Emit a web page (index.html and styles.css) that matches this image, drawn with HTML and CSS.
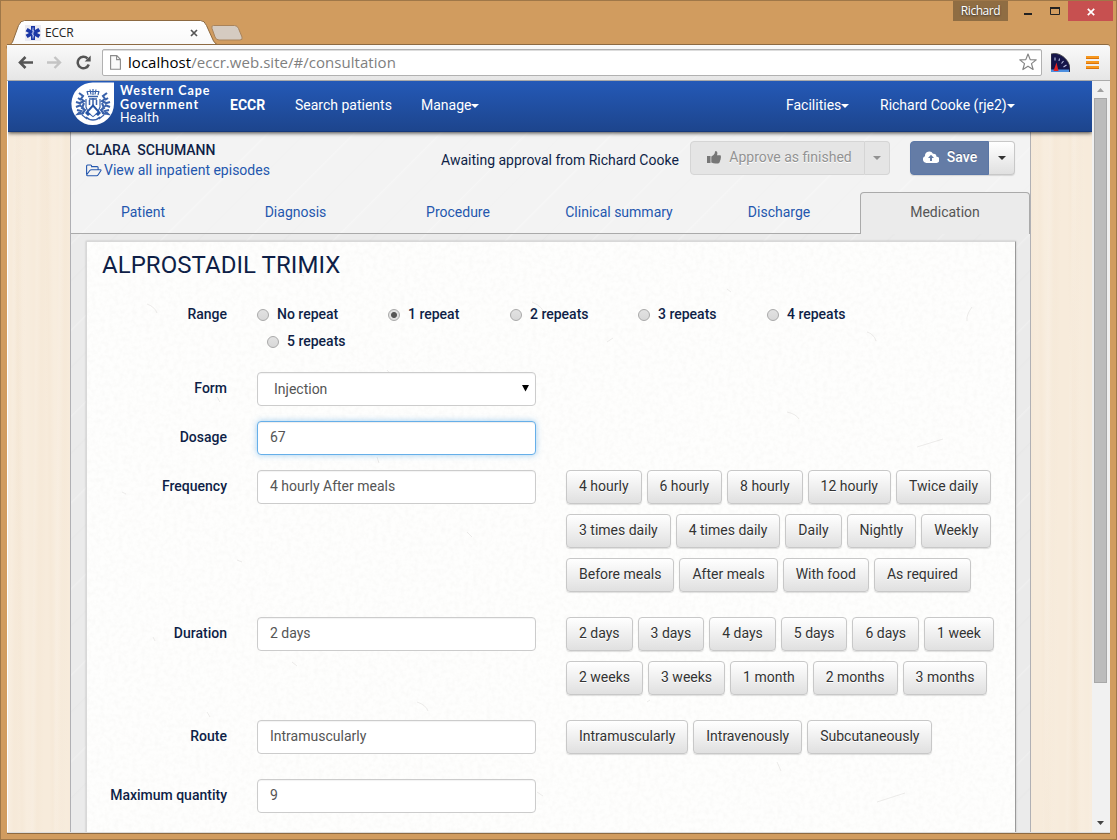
FILE: index.html
```html
<!DOCTYPE html>
<html lang="en">
<head>
<meta charset="utf-8">
<title>ECCR</title>
<link rel="stylesheet" href="styles.css">
</head>
<body>
<div class="window">
  <header class="titlebar">
    <div class="tabstrip">
      <svg class="tab-shape" width="240" height="28" viewBox="0 0 240 28">
        <defs><linearGradient id="tg" x1="0" y1="0" x2="0" y2="1"><stop offset="0" stop-color="#fff"/><stop offset="1" stop-color="#f8f8f8"/></linearGradient></defs>
        <path d="M206.500 5.500h21q3 0 4 3l3.500 8.500q1 3-2 3h-21q-3 0-4-3l-3-8.500q-1-3 1.500-3z" fill="#d5cbc1" stroke="#a9835a"/>
        <path d="M0 26q4-1 5.500-4l6-16.500q2-5 6-5h176q4 0 6 5l7 15.500q2 4 7 4.500v3H0z" fill="url(#tg)" stroke="#8d6a42"/>
      </svg>
      <div class="tab-content">
        <svg width="16" height="16" viewBox="0 0 16 16"><rect width="16" height="16" fill="#ebebf2"/><path d="M6 1h4v4l3.400-2 2 3.300L12 8l3.400 1.800-2 3.300L10 11v4H6v-4l-3.400 2-2-3.300L4 8 .6 6.300l2-3.300L6 5z" fill="#1a37a6"/><path d="M8 2.500v11M6.800 5q2.600.2 2 1.700L7.300 8q-1 1 .7 2t.3 1.600" fill="none" stroke="#c8d2f4" stroke-width=".8"/></svg>
        <span class="tab-title">ECCR</span>
        <svg class="tab-close" width="8" height="8" viewBox="0 0 8 8"><path d="M1 1l6 6M7 1L1 7" stroke="#555" stroke-width="1.700"/></svg>
      </div>
    </div>
    <div class="window-controls">
      <span class="user-badge">Richard</span>
      <svg class="ctl-min" width="8" height="2"><path d="M0 1h8" stroke="#222" stroke-width="2"/></svg>
      <svg class="ctl-max" width="10" height="8"><path d="M.5 1h9v6.500h-9z" fill="none" stroke="#222"/><path d="M0 1h10" stroke="#222" stroke-width="2"/></svg>
      <span class="ctl-close"><svg width="8" height="8" viewBox="0 0 8 8"><path d="M.8.8l6.400 6.400M7.200.8L.8 7.200" stroke="#fff" stroke-width="1.700"/></svg></span>
    </div>
  </header>

  <div class="toolbar">
    <svg class="nav-back" width="15" height="13" viewBox="0 0 15 13"><path d="M15 6.500H2.500M7.500 1L2 6.500 7.500 12" fill="none" stroke="#555" stroke-width="2.600"/></svg>
    <svg class="nav-fwd" width="15" height="13" viewBox="0 0 15 13"><path d="M0 6.500h12.500M7.500 1L13 6.500 7.500 12" fill="none" stroke="#c4c4c4" stroke-width="2.400"/></svg>
    <svg class="nav-reload" width="15" height="15" viewBox="0 0 15 15"><path d="M12.800 9.500a5.700 5.700 0 1 1-1.300-6" fill="none" stroke="#555" stroke-width="2.500"/><path d="M14.700.5v6H8.700z" fill="#555"/></svg>
    <div class="omnibox">
      <svg width="11" height="15" viewBox="0 0 11 15"><path d="M.6.6h6.200l3.600 3.700v10H.6zM6.600.6v4h4" fill="#fafafa" stroke="#8a8a8a" stroke-width="1.100"/></svg>
      <span class="url"><b>localhost</b>/eccr.web.site/#/consultation</span>
      <svg class="star" width="18" height="18" viewBox="0 0 18 18"><path d="M9 1l2.200 5.600 6 .3-4.700 3.700 1.600 5.900L9 13.200l-5.100 3.300 1.600-5.900L.8 6.900l6-.3z" fill="#fff" stroke="#858585" stroke-width="1.200" stroke-linejoin="round"/></svg>
    </div>
    <svg class="gauge" width="19" height="19" viewBox="0 0 19 19"><path d="M0 1Q6-1 12 3.500T19 15v4H0z" fill="#15154a" stroke="#444" stroke-width=".8"/><path d="M0 16.500h18V19H0z" fill="#4c8fe0"/><path d="M2.500 18L5.500 9.500 7.500 18z" fill="#e32222"/><path d="M4 4.500v3M8.500 5.500L8 8M12.500 8l-2 2.500M15.500 12l-3 2" stroke="#b9bfe0" stroke-width="1.100"/></svg>
    <svg class="menu" width="14" height="14" viewBox="0 0 14 14"><g fill="#f7981d"><rect y="1" width="13" height="3"/><rect y="6" width="13" height="3"/><rect y="11" width="13" height="3"/></g><path d="M0 3.500h13M0 8.500h13M0 13.500h13" stroke="#d9730c"/></svg>
  </div>

  <div class="viewport">
    <main class="page">
      <nav class="navbar">
        <svg class="crest" width="44" height="44" viewBox="0 0 44 44">
          <path d="M43 .5V22A21.300 21.300 0 1 1 22 .5z" fill="#fff"/>
          <g fill="none" stroke="#3a62ab" stroke-width="1.200">
            <path d="M16 9l1 4M19 7.500l1 5M22 7v6M25 7.500l-1 5M28 9l-1 4M16 9.500h12" />
            <path d="M17 14.500h10M18 17h8M22 16v8M18.500 18v5M25.500 18v5" stroke-width="1.500"/>
            <path d="M15 17v8q2 6 7 9.500 5-3.500 7-9.500v-8"/>
            <path d="M15 35q3 3 7 3t7-3M11 33q4 3 5 4M33 33q-4 3-5 4" stroke-width="1.500"/>
            <path d="M8 11l4 3-2 3 3 2-4 2M7 16l3 2M5 20l5 1.500M5 25l5-2M13 21l-2 5 3 2-3 4M6 28l4 1-3 3 6-1M10 24l3 3" stroke-width="2.100"/>
            <path d="M36 11l-4 3 2 3-3 2 4 2M37 16l-3 2M39 20l-5 1.500M39 25l-5-2M31 21l2 5-3 2 3 4M38 28l-4 1 3 3-6-1M34 24l-3 3" stroke-width="2.100"/>
          </g>
          <path d="M22 22l-8 9 3 3 5-4 5 4 3-3z" fill="#2452a3"/><path d="M22 25l4.500 5-4.500 4-4.500-4z" fill="#fff"/>
        </svg>
        <div class="brand"><b>Western Cape</b><b>Government</b><span>Health</span></div>
        <a class="nav-eccr">ECCR</a>
        <a class="nav-search">Search patients</a>
        <a class="nav-manage">Manage<i class="caret"></i></a>
        <a class="nav-fac">Facilities<i class="caret"></i></a>
        <a class="nav-user">Richard Cooke (rje2)<i class="caret"></i></a>
      </nav>

      <div class="container">
        <section class="patient-bar">
          <div class="patient">
            <h2>CLARA&nbsp; SCHUMANN</h2>
            <a><svg width="16" height="13" viewBox="0 0 16 13"><path d="M.6 10V2q0-1 1-1h3q1 0 1 1v.6h5.500q1 0 1 1V5.500M.7 10.800L3.800 6.500q.6-.8 1.600-.8h9q1 0 .4 1l-2.600 4q-.6 1-1.600 1H1.500q-1 0-.9-1.500" fill="none" stroke="#2457ae" stroke-width="1.100"/></svg>View all inpatient episodes</a>
          </div>
          <span class="status">Awaiting approval from Richard Cooke</span>
          <div class="btn-group approve">
            <button class="btn btn-main" disabled><svg width="14" height="13" viewBox="0 0 14 13"><path d="M0 5h3.500v7H0zM4.300 5.500L6.500 4Q8 2.500 8 .8 8 0 9 0q1.700.5 1.300 3L10 4.300h3q1.300.3.8 1.700.3 1-.2 1.700.2 1-.4 1.600 0 1-.5 1.500 0 1.700-1.700 1.700H8.500q-2 0-4.200-1z" fill="#777"/></svg>Approve as finished</button>
            <button class="btn btn-drop" disabled><i class="caret"></i></button>
          </div>
          <div class="btn-group save">
            <button class="btn btn-main"><svg width="16" height="12" viewBox="0 0 16 12"><path d="M3.500 12A3.500 3.500 0 0 1 2 5.300 4.300 4.300 0 0 1 10 2.800a2.500 2.500 0 0 1 3.300 2.700A3.200 3.200 0 0 1 13 12z" fill="#fff"/><path d="M8 3.800l3 3.200H9v3H7V7H5z" fill="#647ca6"/></svg>Save</button>
            <button class="btn btn-drop"><i class="caret"></i></button>
          </div>
        </section>

        <div class="tabs">
          <a>Patient</a><a>Diagnosis</a><a>Procedure</a><a>Clinical summary</a><a>Discharge</a><a class="active">Medication</a>
        </div>

        <section class="card">
          <svg class="paper" width="929" height="600" aria-hidden="true">
            <filter id="grain" x="0" y="0" width="100%" height="100%"><feTurbulence type="fractalNoise" baseFrequency=".22" numOctaves="4" seed="4"/><feColorMatrix values="0 0 0 0 .45  0 0 0 0 .43  0 0 0 0 .4  0 0 0 .12 -.045"/></filter>
            <rect width="929" height="600" filter="url(#grain)"/>
            <g fill="none" stroke="#bdbbb6" stroke-opacity=".4" stroke-width=".7">
              <path d="M60 62q8 3 10 9M210 30l7 4M445 60q12 5 13 14M640 47l4 3M780 90q7 2 9 9M885 65q-6 8-5 14M130 155l3 5M300 128q4 3 3 7M520 100l6-4M700 170q9 2 12 7M35 250l4 2M150 318l5 2M290 215l2 6M830 205l26-8M405 390l4 2M205 420l5 4M66 395l2 4M330 460q9 3 11 9M450 550l6 4M690 520l4 9M790 560l28-9M120 470l3 5M240 560l8-3M720 345l5 3M380 290l5 5M585 250l3 2M610 390l2 3M860 330l3 2M560 460l3-2M760 420l2 4"/>
            </g>
          </svg>
          <h1>ALPROSTADIL TRIMIX</h1>

          <div class="row range">
            <label>Range</label>
            <div class="radios">
              <span><i class="radio"></i>No repeat</span>
              <span><i class="radio on"></i>1 repeat</span>
              <span><i class="radio"></i>2 repeats</span>
              <span><i class="radio"></i>3 repeats</span>
              <span><i class="radio"></i>4 repeats</span>
              <span class="wrapped"><i class="radio"></i>5 repeats</span>
            </div>
          </div>
          <div class="row"><label>Form</label><div class="field select">Injection<svg width="7" height="7" viewBox="0 0 7 7"><path d="M0 0h7L3.500 6.500z" fill="#000"/></svg></div></div>
          <div class="row"><label>Dosage</label><div class="field focus">67</div></div>
          <div class="row">
            <label>Frequency</label><div class="field">4 hourly After meals</div>
            <div class="choices">
              <div><button class="btn">4 hourly</button><button class="btn">6 hourly</button><button class="btn">8 hourly</button><button class="btn">12 hourly</button><button class="btn">Twice daily</button></div>
              <div><button class="btn">3 times daily</button><button class="btn">4 times daily</button><button class="btn">Daily</button><button class="btn">Nightly</button><button class="btn">Weekly</button></div>
              <div><button class="btn">Before meals</button><button class="btn">After meals</button><button class="btn">With food</button><button class="btn">As required</button></div>
            </div>
          </div>
          <div class="row">
            <label>Duration</label><div class="field">2 days</div>
            <div class="choices">
              <div><button class="btn">2 days</button><button class="btn">3 days</button><button class="btn">4 days</button><button class="btn">5 days</button><button class="btn">6 days</button><button class="btn">1 week</button></div>
              <div><button class="btn">2 weeks</button><button class="btn">3 weeks</button><button class="btn">1 month</button><button class="btn">2 months</button><button class="btn">3 months</button></div>
            </div>
          </div>
          <div class="row">
            <label>Route</label><div class="field">Intramuscularly</div>
            <div class="choices">
              <div><button class="btn">Intramuscularly</button><button class="btn">Intravenously</button><button class="btn">Subcutaneously</button></div>
            </div>
          </div>
          <div class="row"><label>Maximum quantity</label><div class="field">9</div></div>
        </section>
      </div>
    </main>
    <aside class="scrollbar">
      <svg width="7" height="4"><path d="M0 4L3.500 0 7 4z" fill="#a0a0a0"/></svg>
      <div class="thumb"></div>
      <svg class="down" width="7" height="4"><path d="M0 0h7L3.500 4z" fill="#444"/></svg>
    </aside>
  </div>
</div>
</body>
</html>
```
FILE: styles.css
```css
* { box-sizing: border-box; }
body { margin: 0; width: 1117px; height: 840px; overflow: hidden; font: 14px/20px Roboto, sans-serif; color: #0f1f47; }
svg { display: block; flex: none; }
h1, h2 { margin: 0; }
button { font: inherit; letter-spacing: inherit; margin: 0; }

.window { width: 1117px; height: 840px; background: #d19c5f; border: 1px solid #9f7748; padding: 0 6px 7px; display: flex; flex-direction: column; }

/* Browser chrome */
.titlebar { height: 44px; display: flex; justify-content: space-between; align-items: flex-start; }
.tabstrip { display: grid; padding-top: 19px; }
.tab-shape, .tab-content { grid-area: 1 / 1; }
.tab-shape { overflow: visible; }
.tab-content { display: flex; align-items: center; height: 25px; padding-left: 18px; width: 191px; font: 12px/16px "Open Sans", sans-serif; color: #222; letter-spacing: -.2px; }
.tab-title { margin-left: 4px; }
.tab-close { margin-left: auto; }
.window-controls { display: flex; }
.user-badge { width: 55px; height: 20px; margin-right: 16px; background: #8f6d43; color: #fff; font: 12px/20px "Open Sans", sans-serif; letter-spacing: -.45px; text-align: center; text-shadow: 0 1px 2px #333; }
.ctl-min { margin: 12px 18px 0 0; }
.ctl-max { margin: 6px 8px 0 0; }
.ctl-close { width: 45px; height: 20px; margin-right: -3px; background: #c75050; display: flex; align-items: center; justify-content: center; padding-top: 1px; }
.toolbar { height: 36px; flex: none; background: linear-gradient(#f9f9f9, #e6e6e6); border-bottom: 1px solid #aaa; border-top: 1px solid #fafafa; border-radius: 0 3px 0 0; box-shadow: 0 -1px #8d6a42; display: flex; align-items: center; padding: 0 10px 2px 11px; }
.nav-fwd { margin-left: 14px; }
.nav-reload { margin-left: 14px; }
.omnibox { width: 940px; height: 27px; margin-left: 11px; border: 1px solid #b1b1b1; border-radius: 2px; background: #fff; box-shadow: inset 0 1px #ddd; display: flex; align-items: center; padding: 0 4px 0 7px; }
.url { margin-left: 7px; font: 15px/22px "Open Sans", sans-serif; letter-spacing: .04px; color: #808080; }
.url b { font-weight: 400; color: #000; }
.star { margin-left: auto; }
.gauge { margin-left: 9px; }
.menu { margin-left: 16px; }

/* Viewport */
.viewport { height: 751px; display: flex; padding-left: 1px; background: #fff; box-shadow: 0 1px #dcdcdc, 0 2px #8d6a42; overflow: hidden; }
.page { width: 1084px; flex: none; overflow: hidden; background: repeating-linear-gradient(90.500deg, rgba(255,255,255,0) 0 5px, rgba(255,255,255,.08) 7px 8px, rgba(224,196,160,.04) 12px 14px, rgba(255,255,255,0) 19px 23px), repeating-linear-gradient(89.500deg, rgba(255,255,255,0) 0 11px, rgba(224,196,160,.05) 14px, rgba(255,255,255,.09) 19px 21px, rgba(255,255,255,0) 31px), #f7ebdb; }
.scrollbar { width: 18px; background: #f1f1f1; display: flex; flex-direction: column; align-items: center; padding: 7px 1px 7px 0; }
.thumb { width: 13px; height: 585px; margin-top: 6px; background: #bcbcbc; border: 1px solid #a8a8a8; }
.down { margin-top: auto; }

.navbar { height: 51px; position: relative; padding: 0 0 2px 63px; display: flex; align-items: center; background: linear-gradient(#2459b7, #1d458d); border-bottom: 1px solid #16397c; box-shadow: 0 1px 4px rgba(0,0,0,.75); color: #fff; }
.crest { align-self: flex-start; margin-top: 1px; }
.brand { display: flex; flex-direction: column; width: 111px; padding: 3px 0 0 5px; align-self: flex-start; font: 12.500px/13.500px Lato, sans-serif; letter-spacing: .95px; white-space: nowrap; }
.brand b { font-weight: 700; }
.brand span { font-size: 12.500px; letter-spacing: .5px; }
.nav-eccr { width: 65px; padding-left: 4px; font-weight: 700; }
.nav-search { width: 126px; padding-left: 4px; }
.nav-manage { padding-left: 4px; }
.nav-fac { margin-left: auto; width: 94px; }
.nav-user { width: 212px; }
.caret { display: inline-block; margin-left: 0; border: 4px solid transparent; border-top-color: currentColor; border-bottom: 0; vertical-align: middle; }

.container { width: 961px; margin-left: 62px; border: solid #b0b0b4; border-width: 0 1px; height: 720px; background: repeating-linear-gradient(135deg, rgba(255,255,255,0) 0 17px, rgba(255,255,255,.22) 18px, rgba(255,255,255,0) 20px 43px, rgba(0,0,0,.012) 44px, rgba(255,255,255,0) 46px 61px), #ebebeb; }
.patient-bar { height: 60px; display: flex; align-items: flex-start; padding: 8px 15px 0; background: rgba(255,255,255,.42); }
.patient { width: 355px; }
.patient h2 { font-size: 14px; line-height: 20px; font-weight: 500; }
.patient a { display: flex; align-items: center; gap: 2px; color: #2457ae; }
.status { width: 249px; padding-top: 10px; white-space: nowrap; }
.btn { height: 34px; border: 1px solid #c8c8c8; border-radius: 4px; padding: 0 12px 2px; background: linear-gradient(#fff, #e0e0e0); box-shadow: 0 1px 1px rgba(0,0,0,.12); color: #333; text-shadow: 0 1px #fff; white-space: nowrap; }
.btn-group { display: flex; margin-top: 1px; }
.btn-group .btn { display: flex; align-items: center; justify-content: center; }
.btn-group .btn-main { border-radius: 4px 0 0 4px; gap: 8px; padding-right: 11px; }
.btn-group .btn-drop { border-radius: 0 4px 4px 0; width: 26px; padding: 0; border-left-width: 0; }
.approve { margin-right: 20px; }
.approve .btn { background: #e5e5e5; border-color: #d5d5d5; color: #929292; box-shadow: none; }
.approve .btn-main { width: 175px; padding-left: 15px; }
.approve .btn-drop { width: 25px; }
.save .btn-main { width: 79px; background: #647ca6; border-color: #5b77a7; color: #fff; text-shadow: 0 -1px rgba(0,0,0,.25); font-weight: 500; }

.tabs { height: 42px; display: grid; grid-template-columns: 144px 161px 164px 158px 162px 170px; background: rgba(255,255,255,.42); }
.tabs a { text-align: center; line-height: 40px; color: #2457ae; border-bottom: 1px solid #aaa; }
.tabs .active { border: 1px solid #aaa; border-bottom: 0; border-radius: 4px 4px 0 0; background: #ebebeb; color: #555; line-height: 38px; }

/* Medication form */
.card { position: relative; width: 930px; height: 620px; margin: 7px 0 0 15px; padding: 9px 0 0 15px; border: solid #d8d8d8; border-width: 1px 1px 0; border-right-color: #999; background: #fefefd; box-shadow: 0 0 2px rgba(0,0,0,.2); isolation: isolate; }
.paper { position: absolute; inset: 0; z-index: -1; }
.card h1 { font-size: 24px; line-height: 28px; font-weight: 400; letter-spacing: .05px; }
.row { display: flex; margin-bottom: 15px; }
.row label { width: 125px; margin-right: 30px; text-align: right; font-weight: 500; line-height: 32px; white-space: nowrap; }
.field { width: 279px; height: 34px; border: 1px solid #ccc; border-radius: 4px; background: #fff; box-shadow: inset 0 1px 1px rgba(0,0,0,.05); padding: 0 12px; line-height: 31px; color: #555; }
.select { display: flex; align-items: center; justify-content: space-between; padding: 0 6px 0 16px; }
.select svg { margin-top: -1px; }
.focus { border-color: #66afe9; box-shadow: inset 0 1px 1px rgba(0,0,0,.075), 0 0 6px rgba(102,175,233,.6); }
.choices { margin-left: 30px; }
.choices div { display: flex; gap: 5px; margin-bottom: 10px; }
.range { margin: 22px 0 17px; }
.range label { line-height: 27px; }
.radios { display: grid; grid-template-columns: 131px 122px 128px 129px 100px; grid-auto-rows: 27px; font-weight: 500; line-height: 26px; }
.radios span { display: flex; align-items: flex-start; gap: 8px; white-space: nowrap; }
.radios .wrapped { padding-left: 10px; }
.radio { width: 12px; height: 12px; margin-top: 8px; border: 1px solid #a9a9a9; border-radius: 50%; background: linear-gradient(#e2e2e2, #d8d8d8); }
.radio.on { background: radial-gradient(circle, #555 0 2.500px, #e0e0e0 3.500px); }
```
